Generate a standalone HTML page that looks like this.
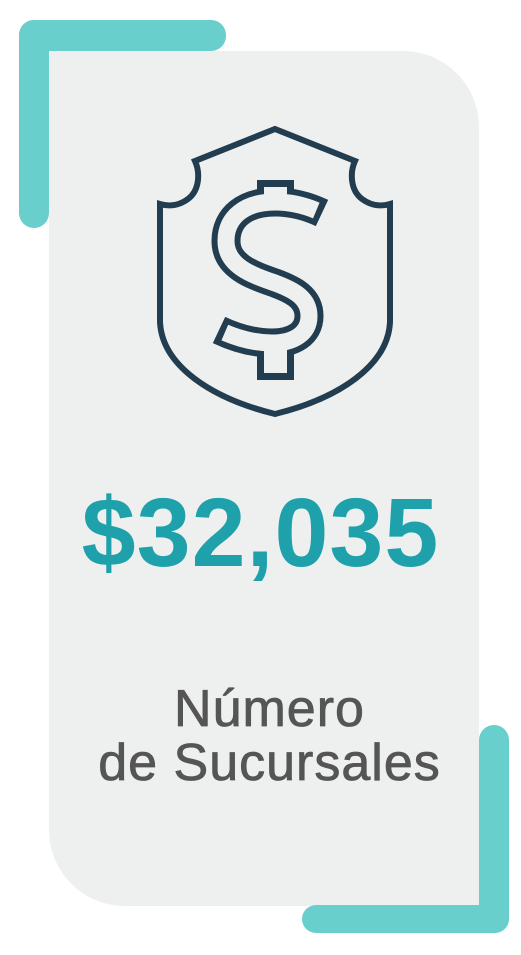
<!DOCTYPE html>
<html><head><meta charset="utf-8"><style>
html,body{margin:0;padding:0;background:#fff;width:521px;height:955px;overflow:hidden;position:relative;font-family:"Liberation Sans",sans-serif}
.card{position:absolute;left:49px;top:51px;width:430px;height:855px;background:#eef0f0;border-top-right-radius:76px;border-bottom-left-radius:76px}
.b{position:absolute;background:#68cfcd;border-radius:15px}
.t{position:absolute;left:0;width:521px;text-align:center}
</style></head><body>
<div class="card"></div>
<div class="b" style="left:19px;top:20px;width:207px;height:31px"></div>
<div class="b" style="left:19px;top:20px;width:30px;height:208px"></div>
<div class="b" style="left:479px;top:725px;width:30px;height:208px"></div>
<div class="b" style="left:302px;top:905px;width:207px;height:28px"></div>
<svg style="position:absolute;left:0;top:0" width="521" height="955" viewBox="0 0 521 955">
<g fill="none" stroke="#223d50" stroke-width="6">
<path d="M275,129 L355,161 C350,172 350,190 362,199 C370,205 380,207 390,204 L390,322 C388,365 340,398 275,414 C210,398 162,365 160,322 L160,204 C170,207 180,205 188,199 C200,190 200,172 195,161 Z"/>
</g>
<rect x="257" y="180" width="37" height="32" fill="#223d50"/>
<rect x="257" y="338" width="37" height="42" fill="#223d50"/>
<path d="M322,213 C305,205 290,202 275,202 C245,202 226,217 226,241 C226,266 252,275 275,283 C294,290 309,298 309,316 C309,334 293,343 272,343 C255,343 238,339 219,330" fill="none" stroke="#223d50" stroke-width="29"/>
<path pathLength="100" stroke-dasharray="0 1.8 96.4 100" d="M322,213 C305,205 290,202 275,202 C245,202 226,217 226,241 C226,266 252,275 275,283 C294,290 309,298 309,316 C309,334 293,343 272,343 C255,343 238,339 219,330" fill="none" stroke="#eef0f0" stroke-width="17"/>
<rect x="264" y="187" width="23" height="22" fill="#eef0f0"/>
<rect x="264" y="350" width="23" height="23" fill="#eef0f0"/>
</svg>
<div class="t" style="top:478px;font-size:97px;font-weight:bold;color:#1fa1ab;line-height:110px;letter-spacing:1px">$32,035</div>
<div class="t" style="top:682px;left:9px;font-size:52px;color:#555;line-height:54px;letter-spacing:1px;-webkit-text-stroke:0.8px #555">Número<br>de Sucursales</div>
</body></html>
